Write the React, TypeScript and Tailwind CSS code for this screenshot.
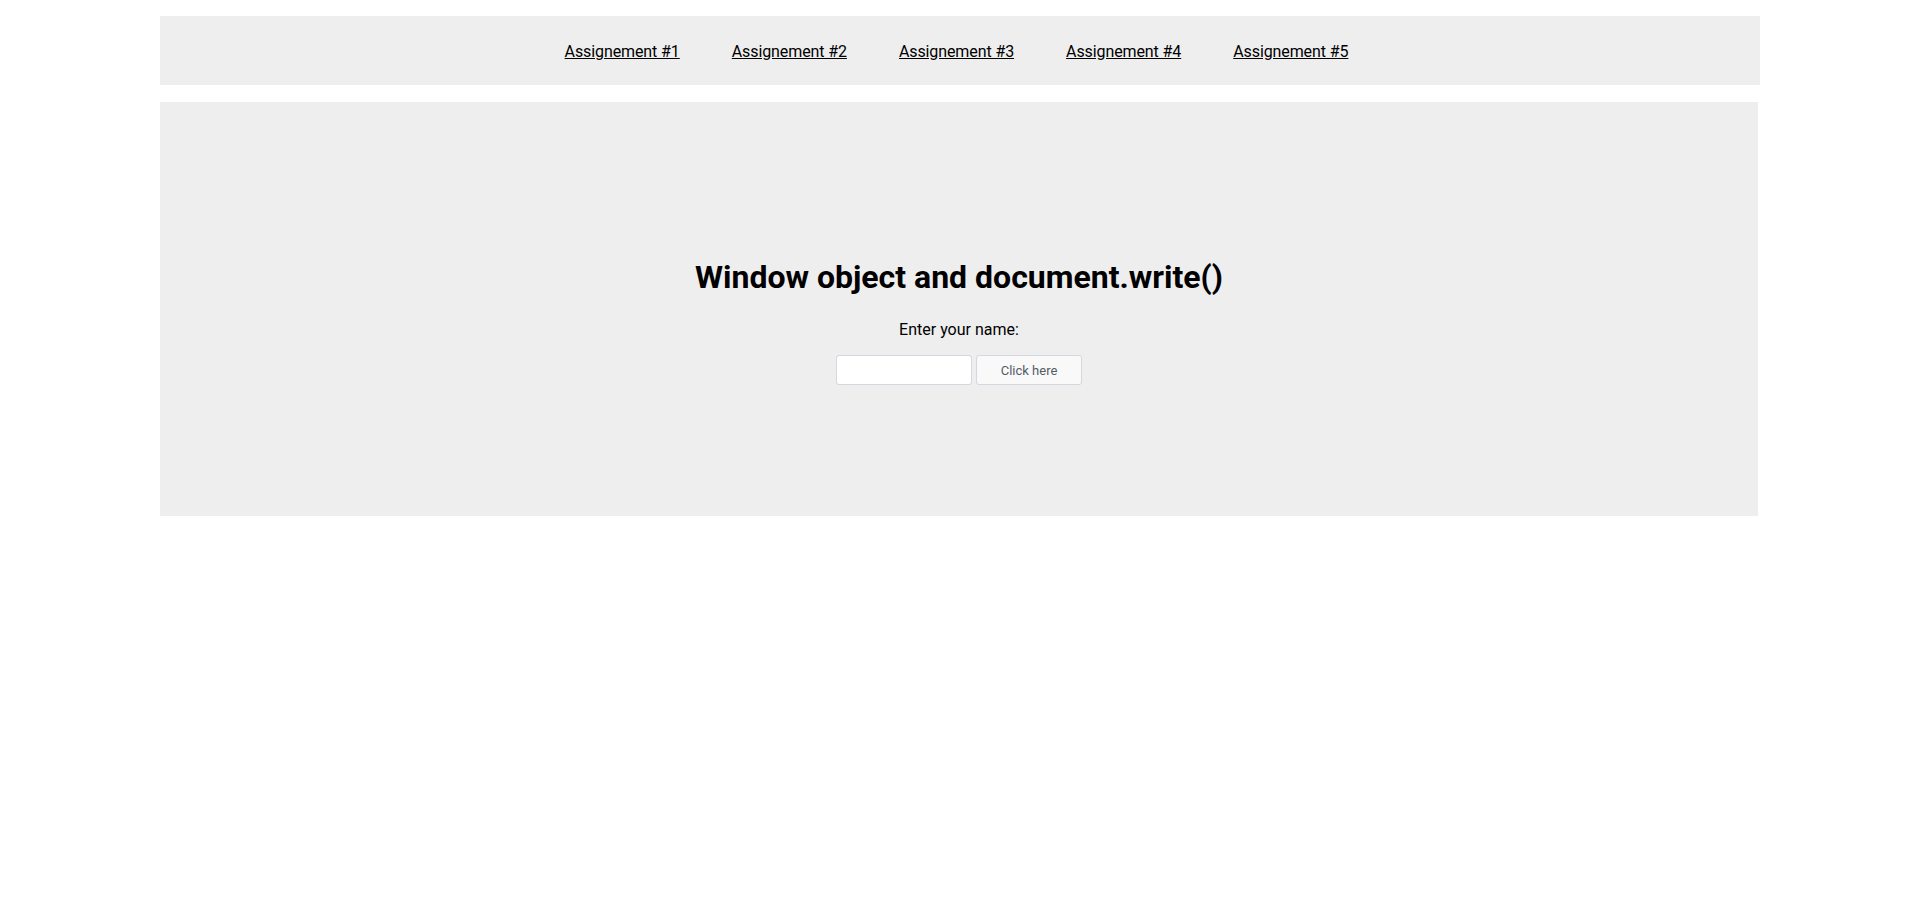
export default function App() {
  const links = ["Assignement #1", "Assignement #2", "Assignement #3", "Assignement #4", "Assignement #5"];
  return (
    <div className="min-h-[923px] bg-white text-black" style={{ fontFamily: "Roboto, 'Noto Sans', sans-serif" }}>
      <div className="w-[1600px] mx-auto pt-4">
        <nav className="h-[69px] pt-[2px] pr-[7px] bg-[#eeeeee] flex items-center justify-center gap-[52px]">
          {links.map((l) => (
            <a key={l} href="#" className="text-base underline text-black leading-6 tracking-[-0.1px]">
              {l}
            </a>
          ))}
        </nav>
        <main className="mt-[17px] w-[1598px] h-[414px] bg-[#eeeeee] flex flex-col items-center pt-[156px]">
          <h1 className="text-[32px] font-bold leading-[38.4px]">Window object and document.write()</h1>
          <p className="mt-[22px] text-base leading-6">Enter your name:</p>
          <div className="mt-[13px] flex gap-1">
            <input
              type="text"
              className="w-[136px] h-[30px] bg-white border border-[#d3d7e0] rounded-[3px] px-2 text-sm outline-none"
            />
            <button className="w-[106px] h-[30px] bg-[#f9f9f9] border border-[#d3d7e0] rounded-[3px] text-[13px] text-[#555b66]">
              Click here
            </button>
          </div>
        </main>
      </div>
    </div>
  );
}
